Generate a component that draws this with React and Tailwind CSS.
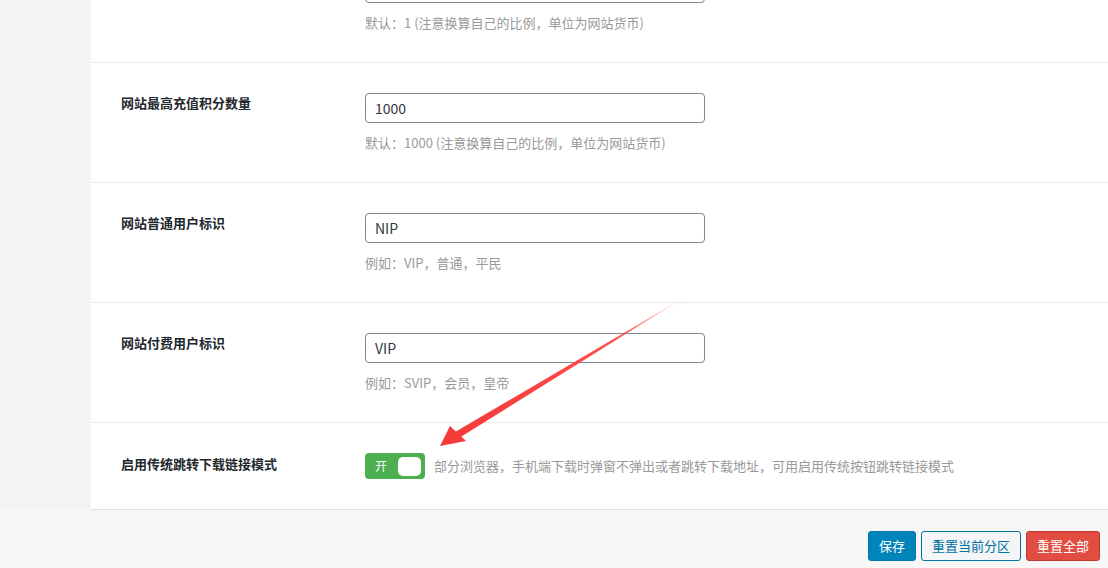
import { useState } from "react";

const rows = [
  { label: "", value: "1", hint: "默认：1 (注意换算自己的比例，单位为网站货币)" },
  { label: "网站最高充值积分数量", value: "1000", hint: "默认：1000 (注意换算自己的比例，单位为网站货币)" },
  { label: "网站普通用户标识", value: "NIP", hint: "例如：VIP，普通，平民" },
  { label: "网站付费用户标识", value: "VIP", hint: "例如：SVIP，会员，皇帝" },
];

const font = { fontFamily: '"Noto Sans CJK SC", "Liberation Sans", sans-serif' };

function FieldRow({ row, first }) {
  return (
    <div className={`flex h-[120px] border-b border-[#ebebeb] pt-[30px] ${first ? "-mt-[57px]" : ""}`}>
      <div className="w-[274px] shrink-0 pl-[30px] text-[13px] font-bold leading-[20px] text-[#23282d]">
        {row.label}
      </div>
      <div>
        <input
          defaultValue={row.value}
          className="h-[30px] w-[340px] rounded-[4px] border border-[#7e8993] bg-white px-[9px] text-[14px] text-[#32373c] outline-none"
        />
        <div className="mt-[10px] text-[13px] leading-[20px] text-[#999]">{row.hint}</div>
      </div>
    </div>
  );
}

export default function App() {
  const [on, setOn] = useState(true);

  return (
    <div className="relative flex h-[568px] w-[1108px] flex-col overflow-hidden bg-[#f3f3f3]" style={font}>
      <div className="ml-[91px] flex-1 overflow-hidden border-b border-[#e2e2e2] bg-white">
        {rows.map((row, i) => (
          <FieldRow key={i} row={row} first={i === 0} />
        ))}
        <div className="flex pt-[30px]">
          <div className="w-[274px] shrink-0 pl-[30px] pt-[1px] text-[13px] font-bold leading-[20px] text-[#23282d]">
            启用传统跳转下载链接模式
          </div>
          <button
            onClick={() => setOn(!on)}
            className={`flex h-[26px] w-[60px] items-center justify-between rounded-[4px] pl-[10px] pr-[4px] ${on ? "bg-[#4caf50]" : "bg-[#ccc]"}`}
          >
            <span className="text-[12px] text-white">{on ? "开" : "关"}</span>
            <span className="h-[19px] w-[23px] rounded-[5px] bg-white" />
          </button>
          <div className="ml-[9px] pt-[3px] text-[13px] leading-[20px] text-[#999]">
            部分浏览器，手机端下载时弹窗不弹出或者跳转下载地址，可用启用传统按钮跳转链接模式
          </div>
        </div>
      </div>

      <div className="flex h-[58px] shrink-0 items-start justify-end gap-[5px] bg-[#f7f7f7] pr-[8px] pt-[21px]">
        <button className="h-[30px] rounded-[3px] border border-[#0073aa] bg-[#0085ba] px-[10px] text-[13px] text-white">
          保存
        </button>
        <button className="h-[30px] rounded-[3px] border border-[#0071a1] bg-[#f3f5f6] px-[10px] text-[13px] text-[#0071a1]">
          重置当前分区
        </button>
        <button className="h-[30px] rounded-[3px] border border-[#c0392b] bg-[#e14d43] px-[10px] text-[13px] text-white">
          重置全部
        </button>
      </div>

      <svg className="pointer-events-none absolute left-0 top-0" width="1108" height="568">
        <defs>
          <linearGradient id="fade" x1="685" y1="297" x2="455" y2="436" gradientUnits="userSpaceOnUse">
            <stop offset="0" stopColor="#ff3b3b" stopOpacity="0.1" />
            <stop offset="0.3" stopColor="#ff3b3b" stopOpacity="0.9" />
            <stop offset="1" stopColor="#f53a3a" />
          </linearGradient>
        </defs>
        <polygon points="685,297 459,438 455,432" fill="url(#fade)" />
        <polygon points="440,446 450,426 466,441" fill="#f53a3a" />
      </svg>
    </div>
  );
}
